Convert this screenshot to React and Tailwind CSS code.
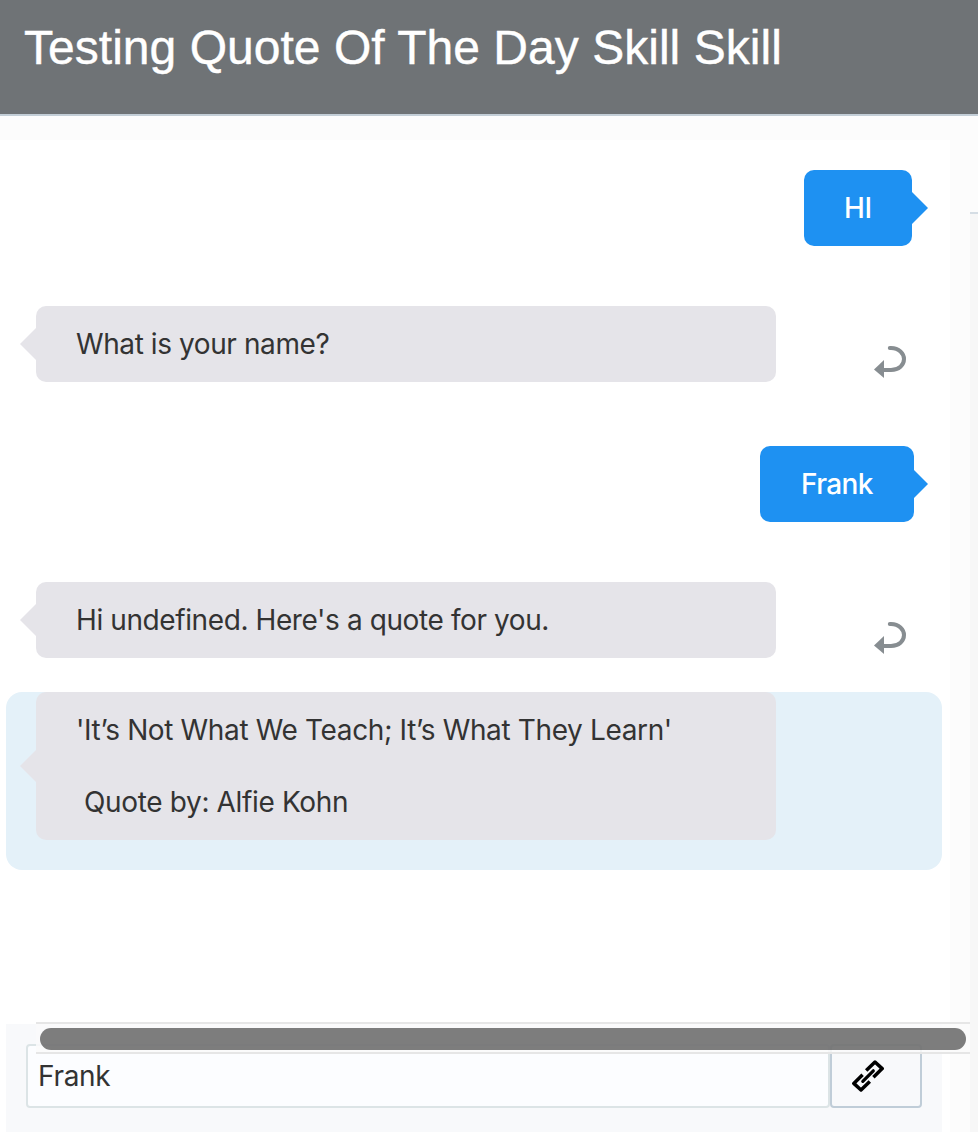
function UserMessage({ children, className, arrow }) {
  return (
    <div className={`flex h-[76px] items-center justify-center ${className}`}>
      <div className="relative flex h-full w-full items-center rounded-[10px] bg-[#1e91f2] pl-10 text-white font-medium">
        {children}
        <svg className={`absolute left-full top-1/2 -translate-y-1/2 ${arrow}`} viewBox="0 0 16 32" preserveAspectRatio="none">
          <path d="M0 0L16 16L0 32Z" fill="#1e91f2" />
        </svg>
      </div>
    </div>
  );
}

function BotMessage({ children, className = "h-[76px]" }) {
  return (
    <div className={`relative ml-9 w-[740px] rounded-[10px] bg-[#e5e4e9] pl-[40px] text-[#333333] ${className}`}>
      <svg className="absolute right-full top-1/2 h-8 w-4 -translate-y-1/2" viewBox="0 0 16 32">
        <path d="M16 0L0 16L16 32Z" fill="#e5e4e9" />
      </svg>
      {children}
    </div>
  );
}

function ReturnIcon() {
  return (
    <svg className="ml-[98px] mt-[40px] h-8 w-8" viewBox="0 0 32 32" fill="none">
      <path d="M15.800 2H17C25 2 30 7.500 30 13C30 19 25 24 17 24H9" stroke="#878d91" strokeWidth="4" strokeLinecap="round" />
      <path d="M0 23.500L10 14V32Z" fill="#878d91" />
    </svg>
  );
}

function LinkIcon() {
  return (
    <svg className="h-8 w-8" viewBox="0 0 32 32" fill="none" stroke="#000" strokeWidth="3.500" strokeLinejoin="round">
      <path d="M14.200 10.600L23 2L30.200 8.600L21.400 17.200" />
      <path d="M10.600 14.800L1.800 23.400L9 30L17.800 21.400" />
      <path d="M10.800 21.300L21.300 10.800" strokeWidth="3.200" strokeLinecap="round" />
    </svg>
  );
}

export default function App() {
  return (
    <div className="flex h-[1132px] w-[978px] flex-col overflow-hidden bg-[#fcfcfc] font-['Inter',sans-serif] text-[28px] leading-9">
      <header className="h-[116px] shrink-0 border-b-2 border-[#c3ced7] bg-[#6f7376] pl-6 pt-5 font-['Liberation_Sans',sans-serif] text-[48px] leading-[56px] text-white">
        <h1 className="whitespace-nowrap"><span className="tracking-[0.03px] [-webkit-text-stroke:0.4px_white]">Testing Quote Of The Day Skill Skill</span></h1>
      </header>
      <div className="flex min-h-0 flex-1">
        <main className="mt-6 flex w-[950px] flex-col bg-white">
          <section className="flex h-[884px] flex-col">
            <UserMessage className="ml-[804px] mt-[30px] w-[108px]" arrow="h-8 w-4"><span className="tracking-[-0.3px]">HI</span></UserMessage>
            <div className="mt-[60px] flex h-[76px]">
              <BotMessage className="flex h-[76px] items-center"><span className="tracking-[-0.41px]">What is your name?</span></BotMessage>
              <ReturnIcon />
            </div>
            <UserMessage className="ml-[760px] mt-[64px] w-[154px]" arrow="h-7 w-3.5"><span className="ml-px tracking-[-0.6px]">Frank</span></UserMessage>
            <div className="mt-[60px] flex h-[76px]">
              <BotMessage className="flex h-[76px] items-center"><span className="tracking-[-0.4px]">Hi undefined. Here's a quote for you.</span></BotMessage>
              <ReturnIcon />
            </div>
            <div className="ml-1.5 mt-[34px] h-[178px] w-[936px] rounded-2xl bg-[#e4f1f9]">
              <div className="-ml-1.5">
                <BotMessage className="h-[148px] pt-5">
                  <p><span className="tracking-[-0.36px]">'It’s Not What We Teach; It’s What They Learn'</span></p>
                  <p className="mt-9 pl-2"><span className="tracking-[-0.35px]">Quote by: Alfie Kohn</span></p>
                </BotMessage>
              </div>
            </div>
          </section>
          <footer className="relative ml-1.5 h-[108px] w-[936px] bg-[#f8f9fb] pl-5 pt-5">
            <div className="flex h-16">
              <div className="flex w-[804px] items-center rounded-[4px] border-2 border-[#dce4e6] bg-[#fcfdff] pl-2.5 text-[#333333]"><span className="tracking-[-0.3px]">Frank</span></div>
              <button className="flex w-[92px] items-center rounded-[4px] border-2 border-[#c0cdd8] pl-5"><LinkIcon /></button>
            </div>
            <div className="absolute -top-0.5 left-[30px] h-8 w-[934px] border-y-2 border-[#e6e6e6] bg-[#fafafa]/85 px-1 pt-1">
              <div className="h-[22px] rounded-full bg-black/50" />
            </div>
          </footer>
        </main>
        <aside className="ml-5 mt-24 w-2 border-t-2 border-[#d5dde4] bg-[#f7f7f7]" />
      </div>
    </div>
  );
}
